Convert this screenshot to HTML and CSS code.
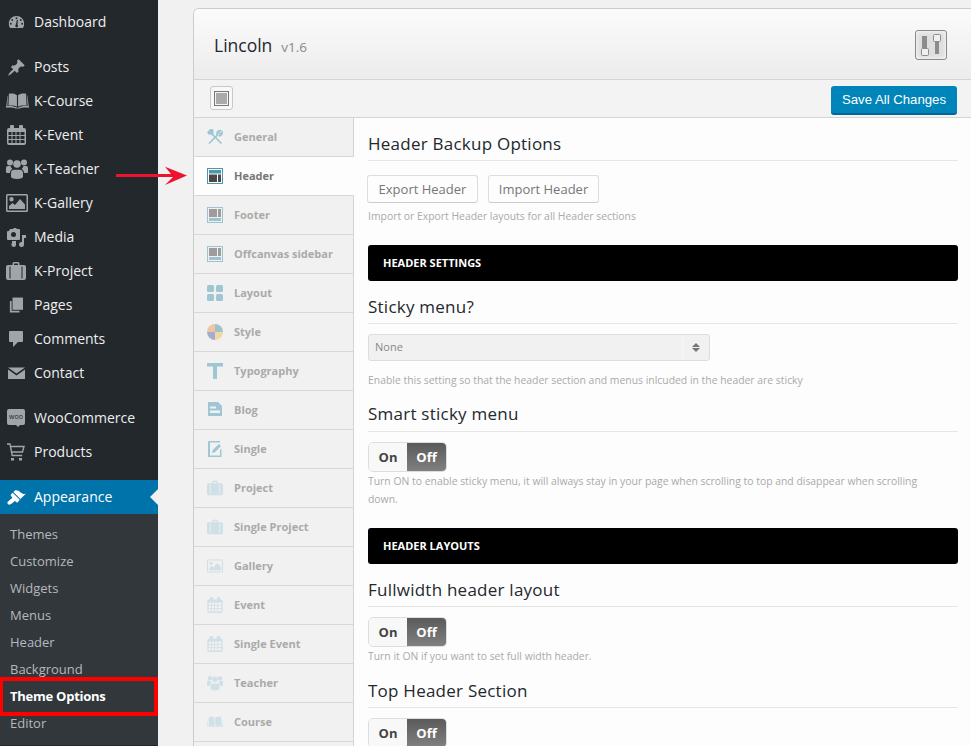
FILE: index.html
```html
<!DOCTYPE html>
<html lang="en">
<head>
<meta charset="utf-8">
<title>Lincoln Theme Options</title>
<link rel="stylesheet" href="styles.css">
</head>
<body>
<svg class="defs" width="0" height="0" aria-hidden="true">
  <symbol id="i-dash" viewBox="0 0 20 16"><path fill-rule="evenodd" d="M10 1C4.900 1 1 5 1 10c0 2 .6 3.800 1.600 5h14.800c1-1.200 1.600-3 1.600-5 0-5-3.900-9-9-9zM10 2.500a1.100 1.100 0 1 1 0 2.200 1.100 1.100 0 0 1 0-2.200zM5 4.500a1.100 1.100 0 1 1 0 2.200 1.100 1.100 0 0 1 0-2.200zM15 4.500a1.100 1.100 0 1 1 0 2.200 1.100 1.100 0 0 1 0-2.200zM3.300 9a1.100 1.100 0 1 1 0 2.200 1.100 1.100 0 0 1 0-2.200zM16.700 9a1.100 1.100 0 1 1 0 2.200 1.100 1.100 0 0 1 0-2.200zM11.700 5.500l-.6 5.600a1.700 1.700 0 1 1-2 .1l1.500-5.800z"/></symbol>
  <symbol id="i-pin" viewBox="0 0 20 20"><path d="M10.440 3.020l1.820-1.820 6.360 6.350-1.830 1.820c-1.050-.68-2.480-.57-3.410.36l-.75.750c-.92.930-1.040 2.350-.35 3.410l-1.830 1.820-2.410-2.410-2.800 2.790c-.42.420-3.380 2.710-3.800 2.290s1.860-3.390 2.280-3.810l2.790-2.790L4.100 9.360l1.830-1.820c1.050.69 2.480.57 3.400-.36l.75-.75c.93-.92 1.050-2.350.36-3.410z"/></symbol>
  <symbol id="i-book" viewBox="0 0 24 16"><path d="M3 .5C6 0 9.500.2 11.400 2v12C9.500 12.700 6 12.500 2.600 13zM21 .5C18 0 14.500.2 12.600 2v12c1.900-1.300 5.400-1.500 8.800-1zM1.800 2.500h.4L1.400 13.300c3.500-.4 7.200-.2 10 1.700h1.200c2.800-1.900 6.500-2.100 10-1.700L21.800 2.500h.4L24 15c-3.500-.6-7.500-.4-10 .8h-4C7.500 14.600 3.500 14.400 0 15z"/></symbol>
  <symbol id="i-cal" viewBox="0 0 19 20"><path fill-rule="evenodd" d="M4 0h2a1 1 0 0 1 1 1v2h5V1a1 1 0 0 1 1-1h2a1 1 0 0 1 1 1v2h1a2 2 0 0 1 2 2v13a2 2 0 0 1-2 2H2a2 2 0 0 1-2-2V5a2 2 0 0 1 2-2h1V1a1 1 0 0 1 1-1zM1.500 7v3h3V7zm4 0v3h3V7zm4 0v3h3V7zm4 0v3h4V7zm-12 4v3h3v-3zm4 0v3h3v-3zm4 0v3h3v-3zm4 0v3h4v-3zm-12 4v3h3v-3zm4 0v3h3v-3zm4 0v3h3v-3zm4 0v3h4v-3z"/></symbol>
  <symbol id="i-users" viewBox="0 0 22 20"><circle cx="4" cy="3.500" r="3"/><circle cx="18" cy="3.500" r="3"/><circle cx="11" cy="5" r="3.800"/><path d="M0 9a2 2 0 0 1 2-2h2.500c.4 1.500 1.200 2.400 2 3-1.500.6-2.500 2-2.500 4H1a1 1 0 0 1-1-1zM22 9a2 2 0 0 0-2-2h-2.500c-.4 1.500-1.200 2.400-2 3 1.500.6 2.500 2 2.500 4h3a1 1 0 0 0 1-1z"/><path d="M5 14c0-2 1.500-3.200 3-3.200h6c1.500 0 3 1.200 3 3.200v3.500c0 1.400-2 2.500-6 2.500s-6-1.100-6-2.500z"/></symbol>
  <symbol id="i-image" viewBox="0 0 22 18"><path fill-rule="evenodd" d="M1.500 0h19A1.500 1.500 0 0 1 22 1.500v15a1.500 1.500 0 0 1-1.500 1.500h-19A1.500 1.500 0 0 1 0 16.500v-15A1.500 1.500 0 0 1 1.500 0zM1.500 1.500v15h19v-15zM5.500 3a2.200 2.200 0 1 1 0 4.400 2.200 2.200 0 0 1 0-4.400zM3 15v-3l3.500-3 2.500 2 5-6 5 5.500V15z"/></symbol>
  <symbol id="i-media" viewBox="0 0 19 19"><path fill-rule="evenodd" d="M3 1h3l1-1h2l1 1h2a1 1 0 0 1 1 1v9a1 1 0 0 1-1 1H1a1 1 0 0 1-1-1V4a1 1 0 0 1 1-1h1zM6.500 4a2.500 2.500 0 1 0 0 5 2.500 2.500 0 0 0 0-5z"/><path d="M15 7h4v3h-2v6.500a2.500 2.500 0 1 1-2-2.400zM5 13h4v3.500a2.300 2.300 0 1 1-2-2.200V15H5z"/></symbol>
  <symbol id="i-case" viewBox="0 0 20 18"><path fill-rule="evenodd" d="M6.500 3V1.500A1.500 1.500 0 0 1 8 0h4a1.500 1.500 0 0 1 1.500 1.500V3H18a2 2 0 0 1 2 2v11a2 2 0 0 1-2 2H2a2 2 0 0 1-2-2V5a2 2 0 0 1 2-2zM8 1.500V3h4V1.500zM3.500 4.500v12h1v-12zm12 0v12h1v-12z"/></symbol>
  <symbol id="i-pages" viewBox="0 0 16 17"><path d="M1 4h2v11h9v2H1z"/><path d="M4 0h12v14H4z"/></symbol>
  <symbol id="i-comment" viewBox="0 0 14 16"><path d="M1 0h12a1 1 0 0 1 1 1v9a1 1 0 0 1-1 1H9l-5 5v-5H1a1 1 0 0 1-1-1V1a1 1 0 0 1 1-1z"/></symbol>
  <symbol id="i-mail" viewBox="0 0 17 12"><path d="M0 .5h17L8.500 6.500zM0 2.500l8.500 6 8.500-6V12H0z"/></symbol>
  <symbol id="i-cart" viewBox="0 0 18 18"><path fill="none" stroke="currentColor" stroke-width="1.400" d="M0 1h3l2.200 11.500h10M3.500 3.500H17L15.500 9H4.500"/><rect x="4" y="15" width="3" height="2.500"/><rect x="12" y="15" width="3" height="2.500"/></symbol>
  <symbol id="i-brush" viewBox="0 0 21 18"><path d="M14.480 11.060L7.410 3.990l1.500-1.500c.5-.56 2.300-.47 3.510.32 1.210.8 1.430 1.280 2.910 2.100 1.180.64 2.450 1.260 4.450.85zm-.71.71L6.700 4.700 4.930 6.470c-.39.39-.39 1.020 0 1.410l1.060 1.060c.39.39.39 1.030 0 1.420-.6.6-1.430 1.110-2.210 1.690-.35.26-.7.53-1.010.84C1.430 13.230.91 14.910 1.920 16.100c.94 1.100 2.540.5 3.950-.5.720-.5 1.400-1.300 1.950-1.960.55-.59 1.100-.9 1.500-.5l1.060 1.060c.39.39 1.020.39 1.410 0z"/></symbol>
  <symbol id="i-tools" viewBox="0 0 16 16"><g fill="none" stroke="currentColor" stroke-width="1.700"><path d="M2 14.500L11 5.500"/><path d="M10.300 5.800c-.6-1.600 0-3.500 2-4.300l.9.1-1.500 1.800.6 1.200 1.300.2 1.500-1.600c.3 2-1.300 3.700-3.600 3.500"/><path d="M14.500 14.500L5 5"/></g><path d="M0 3.500L3 0h2.500L7 1.500 6 2.500 7 4 4.500 6.500 3 5 2 6z"/></symbol>
  <symbol id="i-hdr" viewBox="0 0 16 16"><path fill="#4c97ae" d="M0 0h16v16H0zM1 1v14h14V1z" fill-rule="evenodd"/><rect x="2" y="2" width="12" height="3.500" fill="#4c97ae"/><rect x="2" y="6.500" width="8" height="7.500" fill="#4a4a4a"/><rect x="11" y="6.500" width="3" height="7.500" fill="#4a4a4a"/></symbol>
  <symbol id="i-ftr" viewBox="0 0 16 16"><path fill="#4c97ae" d="M0 0h16v16H0zM1 1v14h14V1z" fill-rule="evenodd"/><rect x="2" y="2" width="8" height="8" fill="#4a4a4a"/><rect x="11" y="2" width="3" height="8" fill="#4a4a4a"/><rect x="2" y="11" width="12" height="3" fill="#4c97ae"/></symbol>
  <symbol id="i-layout" viewBox="0 0 16 16"><rect width="7" height="7" rx="1.500"/><rect x="9" width="7" height="7" rx="1.500"/><rect y="9" width="7" height="7" rx="1.500"/><rect x="9" y="9" width="7" height="7" rx="1.500"/></symbol>
  <symbol id="i-style" viewBox="0 0 16 16"><path fill="#ee9c5a" d="M8 8V0a8 8 0 0 0-8 8z"/><path fill="#4c97ae" d="M8 8V0a8 8 0 0 1 8 8z"/><path fill="#5a6cb0" d="M8 8H0a8 8 0 0 0 8 8z"/><path fill="#f0c35a" d="M8 8h8a8 8 0 0 1-8 8z"/></symbol>
  <symbol id="i-type" viewBox="0 0 16 16"><path d="M0 0h16v3.500H10V16H6V3.500H0z"/></symbol>
  <symbol id="i-blog" viewBox="-1 0 16 16"><path fill-rule="evenodd" d="M0 0h10l4 4v10H0zM2 4.500v2h6v-2zM2 8.500v2.500h10V8.500z"/></symbol>
  <symbol id="i-single" viewBox="-1 0 16 16"><path fill-rule="evenodd" d="M1 0h11v1.500H2v13h10V9l1.500-1.500V16H0V1a1 1 0 0 1 1-1z"/><path d="M4 12l.8-3L11 3l2 2-6 6.300z"/></symbol>
  <symbol id="i-sliders" viewBox="1 1 30 28"><rect x="7" y="6" width="5" height="12" fill="#8c8c8c"/><rect x="20" y="11" width="4" height="13" fill="#8c8c8c"/><rect x="6.500" y="18.500" width="7" height="7" rx="1" fill="#efefef" stroke="#8c8c8c"/><rect x="18.500" y="4.500" width="7" height="7" rx="1" fill="#efefef" stroke="#8c8c8c"/></symbol>
</svg>

<div class="page">
  <nav class="side">
    <ul class="menu">
      <li class="mi"><svg class="ic ic-dash"><use href="#i-dash"/></svg>Dashboard</li>
    </ul>
    <ul class="menu">
      <li class="mi"><svg class="ic ic-pin"><use href="#i-pin"/></svg>Posts</li>
      <li class="mi"><svg class="ic ic-book"><use href="#i-book"/></svg>K-Course</li>
      <li class="mi"><svg class="ic ic-cal"><use href="#i-cal"/></svg>K-Event</li>
      <li class="mi"><svg class="ic ic-users"><use href="#i-users"/></svg>K-Teacher</li>
      <li class="mi"><svg class="ic ic-image"><use href="#i-image"/></svg>K-Gallery</li>
      <li class="mi"><svg class="ic ic-media"><use href="#i-media"/></svg>Media</li>
      <li class="mi"><svg class="ic ic-case"><use href="#i-case"/></svg>K-Project</li>
      <li class="mi"><svg class="ic ic-pages"><use href="#i-pages"/></svg>Pages</li>
      <li class="mi"><svg class="ic ic-comment"><use href="#i-comment"/></svg>Comments</li>
      <li class="mi"><svg class="ic ic-mail"><use href="#i-mail"/></svg>Contact</li>
    </ul>
    <ul class="menu">
      <li class="mi"><span class="ic ic-woo">woo</span>WooCommerce</li>
      <li class="mi"><svg class="ic ic-cart"><use href="#i-cart"/></svg>Products</li>
    </ul>
    <ul class="menu">
      <li class="mi mi-on"><svg class="ic ic-brush"><use href="#i-brush"/></svg>Appearance</li>
    </ul>
    <ul class="sub">
      <li>Themes</li>
      <li>Customize</li>
      <li>Widgets</li>
      <li>Menus</li>
      <li>Header</li>
      <li>Background</li>
      <li class="sub-on">Theme Options</li>
      <li>Editor</li>
    </ul>
  </nav>

  <main class="panel">
    <header class="phead">
      <div class="ptitle"><span class="pname">Lincoln</span><span class="pver">v1.6</span></div>
      <div class="pbadge"><svg class="pbadge-ic"><use href="#i-sliders"/></svg></div>
    </header>
    <div class="ptool">
      <div class="tbtn"><span class="tbtn-ic"></span></div>
      <button class="save">Save All Changes</button>
    </div>
    <div class="pbody">
      <ul class="tabs">
        <li class="tab"><svg class="ti"><use href="#i-tools"/></svg>General</li>
        <li class="tab tab-on"><svg class="ti"><use href="#i-hdr"/></svg>Header</li>
        <li class="tab tab-m"><svg class="ti"><use href="#i-ftr"/></svg>Footer</li>
        <li class="tab tab-m"><svg class="ti"><use href="#i-ftr"/></svg>Offcanvas sidebar</li>
        <li class="tab"><svg class="ti"><use href="#i-layout"/></svg>Layout</li>
        <li class="tab tab-m"><svg class="ti"><use href="#i-style"/></svg>Style</li>
        <li class="tab"><svg class="ti"><use href="#i-type"/></svg>Typography</li>
        <li class="tab"><svg class="ti"><use href="#i-blog"/></svg>Blog</li>
        <li class="tab"><svg class="ti"><use href="#i-single"/></svg>Single</li>
        <li class="tab tab-l"><svg class="ti"><use href="#i-case"/></svg>Project</li>
        <li class="tab tab-l"><svg class="ti"><use href="#i-case"/></svg>Single Project</li>
        <li class="tab tab-l"><svg class="ti"><use href="#i-image"/></svg>Gallery</li>
        <li class="tab tab-l"><svg class="ti"><use href="#i-cal"/></svg>Event</li>
        <li class="tab tab-l"><svg class="ti"><use href="#i-cal"/></svg>Single Event</li>
        <li class="tab tab-l"><svg class="ti"><use href="#i-users"/></svg>Teacher</li>
        <li class="tab tab-l"><svg class="ti"><use href="#i-book"/></svg>Course</li>
      </ul>
      <section class="content">
        <h2 class="h h-first">Header Backup Options</h2>
        <div class="btns"><button class="btn">Export Header</button><button class="btn">Import Header</button></div>
        <p class="desc">Import or Export Header layouts for all Header sections</p>
        <div class="bar">HEADER SETTINGS</div>
        <h2 class="h">Sticky menu?</h2>
        <div class="sel"><span class="sel-v">None</span><span class="sel-a"><i class="up"></i><i class="dn"></i></span></div>
        <p class="desc desc-sel">Enable this setting so that the header section and menus inlcuded in the header are sticky</p>
        <h2 class="h h-tight">Smart sticky menu</h2>
        <div class="tog"><span class="tog-on">On</span><span class="tog-off">Off</span></div>
        <p class="desc desc-tog">Turn ON to enable sticky menu, it will always stay in your page when scrolling to top and disappear when scrolling down.</p>
        <div class="bar">HEADER LAYOUTS</div>
        <h2 class="h">Fullwidth header layout</h2>
        <div class="tog"><span class="tog-on">On</span><span class="tog-off">Off</span></div>
        <p class="desc desc-tog">Turn it ON if you want to set full width header.</p>
        <h2 class="h">Top Header Section</h2>
        <div class="tog"><span class="tog-on">On</span><span class="tog-off">Off</span></div>
      </section>
    </div>
  </main>
</div>

<div class="mark"></div>
<svg class="arrow" viewBox="0 0 72 20" width="72" height="20"><path fill="#f0132d" d="M0 8h55L49 .7 71 9.500 49 19l8-8H0z"/></svg>
</body>
</html>
```

FILE: styles.css
```css
* { box-sizing: border-box; }
html, body { margin: 0; padding: 0; height: 746px; overflow: hidden; }
body { background: #f1f1f1; font-family: "Open Sans", sans-serif; position: relative; }
ul { list-style: none; margin: 0; padding: 0; }
.defs { position: absolute; }
.page { display: flex; height: 746px; }

/* sidebar */
.side { width: 158px; flex: none; background: #23282d; padding-top: 5px; color: #eee; }
.menu { margin-bottom: 11px; }
.mi { height: 34px; display: flex; align-items: center; padding: 0 0 2px 34px; font-size: 14px; position: relative; color: #eee; }
.ic { position: absolute; color: #a0a5aa; fill: #a0a5aa; top: 50%; }
.ic-dash { left: 8px; width: 17px; height: 14px; margin-top: -7px; }
.ic-pin { left: 7px; width: 19px; height: 19px; margin-top: -9px; }
.ic-book { left: 6px; width: 23px; height: 16px; margin-top: -8px; }
.ic-cal { left: 7px; width: 19px; height: 20px; margin-top: -10px; }
.ic-users { left: 6px; width: 22px; height: 20px; margin-top: -10px; }
.ic-image { left: 6px; width: 22px; height: 18px; margin-top: -9px; }
.ic-media { left: 7px; width: 19px; height: 19px; margin-top: -9px; }
.ic-case { left: 6px; width: 20px; height: 18px; margin-top: -9px; }
.ic-pages { left: 9px; width: 14px; height: 16px; margin-top: -8px; }
.ic-comment { left: 9px; width: 14px; height: 16px; margin-top: -8px; }
.ic-mail { left: 8px; width: 17px; height: 12px; margin-top: -6px; }
.ic-cart { left: 7px; width: 18px; height: 18px; margin-top: -9px; }
.ic-woo { left: 7px; width: 18px; height: 16px; margin-top: -9px; background: #a0a5aa; border-radius: 2px; color: #23282d; font-size: 7px; line-height: 15px; text-align: center; }
.ic-woo::after { content: ""; position: absolute; left: 9px; top: 16px; border: 2px solid transparent; border-top-color: #a0a5aa; border-bottom: 0; }
.mi-on { background: #0073aa; color: #fff; }
.mi-on .ic { fill: #fff; color: #fff; }
.ic-brush { left: 6px; width: 21px; height: 18px; margin-top: -9px; }
.mi-on::after { content: ""; position: absolute; right: 0; top: 50%; margin-top: -8px; border: 8px solid transparent; border-right-color: #f1f1f1; border-left: 0; }
.sub { background: #32373c; margin-top: -11px; padding-top: 7px; height: 231px; }
.sub li { height: 27px; line-height: 26px; padding-left: 10px; font-size: 13px; color: #b4b9be; }
.sub .sub-on { color: #fff; font-weight: 700; letter-spacing: -.25px; }

/* panel */
.panel { flex: 1; margin: 8px 0 0 35px; border: 1px solid #ccc; border-right: 0; border-bottom: 0; border-radius: 6px 0 0 0; background: #fdfdfd; min-width: 0; overflow: hidden; }
.phead { height: 71px; display: flex; align-items: center; justify-content: space-between; padding: 0 24px 0 20px; background: linear-gradient(#fbfbfb, #ececec); border-bottom: 1px solid #d4d4d4; }
.ptitle { display: flex; align-items: baseline; gap: 9px; padding-top: 1px; }
.pname { font-size: 17.5px; font-weight: 500; color: #23282d; }
.pver { font-size: 13.5px; color: #888; }
.pbadge { width: 32px; height: 30px; border: 1px solid #8a8a8a; border-radius: 3px; background: #dedede; box-shadow: inset 0 0 5px #fff; display: flex; margin-top: 2px; }
.pbadge-ic { width: 30px; height: 28px; }
.ptool { height: 38px; display: flex; align-items: center; justify-content: space-between; padding: 0 14px 0 16px; background: #f3f3f3; border-bottom: 1px solid #d4d4d4; }
.tbtn { width: 23px; height: 24px; border: 1px solid #c8c8c8; border-radius: 3px; background: #f8f8f8; display: flex; align-items: center; justify-content: center; margin-top: -1px; }
.tbtn-ic { width: 15px; height: 15px; border: 1px solid #777; background: #aaa; box-shadow: inset 0 0 0 1px #f4f4f4; }
.save { width: 126px; height: 29px; margin-top: 4px; border: 0; border-bottom: 2px solid #006799; border-radius: 3px; background: #0085ba; color: #fff; font: 13.2px/1 "Liberation Sans", Arial, sans-serif; padding: 0; }
.pbody { display: flex; align-items: flex-start; }

/* tabs */
.tabs { width: 160px; flex: none; border-right: 1px solid #d4d4d4; height: 640px; background: #f1f1f1; }
.tab { height: 39px; border-bottom: 1px solid #d8d8d8; display: flex; align-items: center; padding: 0 0 1px 40px; font-size: 11px; font-weight: 700; color: #aaa; position: relative; }
.ti { position: absolute; left: 13px; top: 11px; width: 16px; height: 16px; color: #9ec6d3; fill: #9ec6d3; }
.tab-m .ti { opacity: .5; }
.tab-l .ti { color: #cfe0e6; fill: #cfe0e6; }
.tab-on { background: #fdfdfd; color: #777; margin-right: -1px; }
.tab-on .ti { opacity: 1; }

/* content */
.content { flex: 1; min-width: 0; padding: 0 13px 0 14px; display: flex; flex-direction: column; background: #fdfdfd; }
.h { margin: 15px 0 0; font-size: 17px; line-height: 22px; font-weight: 500; letter-spacing: .24px; color: #23282d; padding-bottom: 5px; border-bottom: 1px solid #e6e6e6; height: 28px; flex: none; }
.h-tight { margin-top: 14px; height: 29px; }
.btns { display: flex; gap: 10px; margin: 14px 0 0 -1px; }
.btn { width: 111px; height: 28px; border: 1px solid #ddd; border-bottom-color: #ccc; border-radius: 3px; background: #fdfdfd; font: 13px/1 "Open Sans", sans-serif; color: #777; padding: 0; }
.desc { margin: 4px 0 0; font-size: 10.4px; line-height: 18px; color: #aaa; max-width: 570px; }
.desc-sel { margin-top: 10px; }
.desc-tog { margin-top: 0; }
.bar { margin-top: 20px; height: 36px; line-height: 36px; padding-left: 15px; background: #000; color: #fff; border-radius: 3px; font-size: 11px; font-weight: 700; flex: none; }
.sel { margin-top: 10px; width: 342px; height: 27px; display: flex; align-items: center; justify-content: space-between; border: 1px solid #ddd; border-radius: 3px; background: #f1f1f1; flex: none; }
.sel-v { padding: 0 0 3px 6px; font-size: 11px; color: #888; }
.sel-a { width: 27px; height: 25px; border-left: 1px solid #f6f6f6; display: flex; flex-direction: column; align-items: center; justify-content: center; gap: 1px; }
.up { border: 4px solid transparent; border-top: 0; border-bottom: 4px solid #777; }
.dn { border: 4px solid transparent; border-bottom: 0; border-top: 4px solid #777; }
.tog { margin-top: 10px; display: flex; width: 79px; height: 30px; border: 1px solid #ddd; border-radius: 5px; overflow: hidden; flex: none; font-size: 13px; font-weight: 700; line-height: 29px; text-align: center; }
.tog-on { width: 38px; background: #f8f8f8; color: #444; }
.tog-off { width: 39px; background: linear-gradient(#5a5a5a, #808080); color: #fff; }

/* annotations over the screenshot */
.mark { position: absolute; left: 0; top: 677px; width: 158px; height: 39px; border: 4px solid #f00; border-left-width: 3px; }
.arrow { position: absolute; left: 116px; top: 166px; }
```
